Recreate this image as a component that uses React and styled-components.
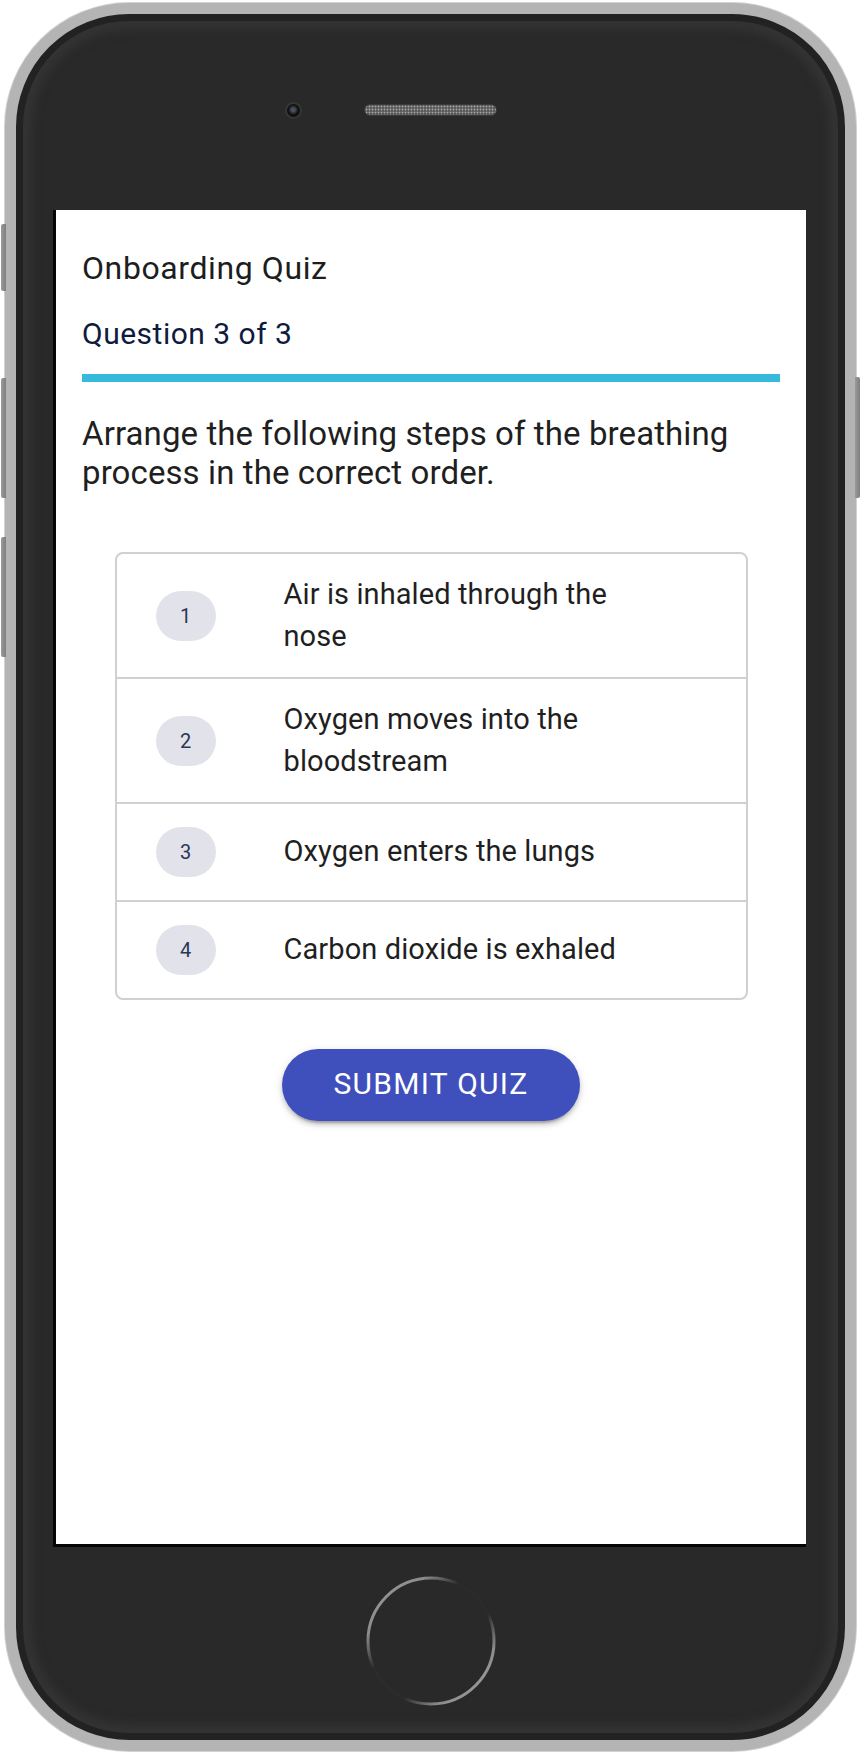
import React from "react";
import styled, { createGlobalStyle } from "styled-components";

const GlobalStyle = createGlobalStyle`
  html, body { margin: 0; padding: 0; background: #ffffff; }
  body { font-family: Roboto, "Liberation Sans", Arial, sans-serif; }
  * { box-sizing: border-box; }
`;

const Stage = styled.div`
  position: relative;
  width: 862px;
  height: 1754px;
  padding: 3px 0 0 5px;
`;

const SideKey = styled.div`
  position: absolute;
  z-index: 2;
  left: ${(p) => (p.$right ? "855px" : "1px")};
  top: ${(p) => p.$top}px;
  width: 5px;
  height: ${(p) => p.$h}px;
  border-radius: ${(p) => (p.$right ? "0 2px 2px 0" : "2px 0 0 2px")};
  background: linear-gradient(to right, #9a9a9a, #7e7e7e);
`;

const Phone = styled.div`
  position: relative;
  z-index: 1;
  width: 851px;
  height: 1748px;
  border: 11px solid #b4b4b4;
  border-radius: 124px;
  background: #292929;
  box-shadow: 0 0 0 1px #d2d2d2, inset 0 0 0 7px #222222,
    inset 0 0 10px 16px #333333;
  display: flex;
  flex-direction: column;
  padding: 0 39px 0 37px;
`;

const TopBezel = styled.div`
  height: 196px;
  margin: 0 -39px 0 -37px;
  padding-bottom: 4px;
  display: grid;
  grid-template-columns: 1fr auto 1fr;
  align-items: center;
`;

const Camera = styled.div`
  justify-self: end;
  margin-right: 62px;
  width: 17px;
  height: 17px;
  border-radius: 50%;
  border: 2px solid #363636;
  background: radial-gradient(circle at 48% 45%, #4a4f60 0 18%, #101010 50%);
`;

const Speaker = styled.div`
  width: 133px;
  height: 12px;
  border-radius: 6px;
  border: 1px solid #3a3a3a;
  background-color: #5a5a5a;
  background-image: radial-gradient(#a8a8a8 0.8px, transparent 1.1px);
  background-size: 3px 3px;
`;

const Screen = styled.div`
  height: 1337px;
  background: #ffffff;
  border-left: 3px solid #050505;
  border-bottom: 3px solid #050505;
  padding: 34px 26px 0 26px;
  overflow: hidden;
`;

const Title = styled.div`
  font-size: 32px;
  line-height: 48px;
  letter-spacing: 0.6px;
  color: #1d1d1d;
`;

const Counter = styled.div`
  margin-top: 19px;
  font-size: 30px;
  line-height: 45px;
  letter-spacing: 0.5px;
  color: #0e1b3d;
`;

const Track = styled.div`
  margin-top: 18px;
  height: 8px;
  background: #b6e6f1;
`;

const Fill = styled.div`
  height: 100%;
  background: #36b9da;
`;

const Prompt = styled.div`
  margin-top: 32px;
  font-size: 33px;
  line-height: 39px;
  letter-spacing: 0.1px;
  color: #1f1f1f;
`;

const Card = styled.div`
  width: 633px;
  margin: 60px auto 0;
  border: 2px solid #d0d0d0;
  border-radius: 8px;
  overflow: hidden;
`;

const Row = styled.div`
  display: flex;
  align-items: center;
  box-sizing: content-box;
  min-height: 56px;
  padding: 20px 0 20px 39px;
  & + & {
    border-top: 2px solid #d0d0d0;
  }
`;

const Badge = styled.div`
  flex-shrink: 0;
  width: 60px;
  height: 50px;
  border-radius: 25px;
  background: #e2e3ea;
  color: #2b3656;
  font-size: 20px;
  display: flex;
  align-items: center;
  justify-content: center;
`;

const ItemText = styled.div`
  margin-left: 68px;
  width: 350px;
  font-size: 29px;
  line-height: 41.5px;
  letter-spacing: 0.1px;
  color: #1f1f1f;
`;

const SubmitButton = styled.button`
  display: flex;
  align-items: center;
  justify-content: center;
  margin: 49px auto 0;
  width: 298px;
  height: 72px;
  padding: 0 0 4px;
  border: none;
  border-radius: 36px;
  background: #3f50bd;
  color: #ffffff;
  font-family: Roboto, "Liberation Sans", Arial, sans-serif;
  font-weight: 400;
  font-size: 30px;
  letter-spacing: 1.3px;
  text-transform: uppercase;
  box-shadow: 0 6px 2px -4px rgba(0, 0, 0, 0.2), 0 4px 4px 0 rgba(0, 0, 0, 0.14),
    0 2px 10px 0 rgba(0, 0, 0, 0.12);
  cursor: pointer;
`;

const BottomBezel = styled.div`
  flex: 1;
  display: flex;
  align-items: center;
  justify-content: center;
  margin: 0 -39px 0 -37px;
  padding-bottom: 5px;
`;

const HomeRing = () => (
  <svg width="134" height="134" viewBox="0 0 134 134">
    <defs>
      <linearGradient id="ringGrad" x1="0" y1="0" x2="1" y2="1">
        <stop offset="0" stopColor="#9c9c9c" />
        <stop offset="0.22" stopColor="#8c8c8c" />
        <stop offset="0.38" stopColor="#2b2b2b" />
        <stop offset="0.62" stopColor="#2b2b2b" />
        <stop offset="0.78" stopColor="#8c8c8c" />
        <stop offset="1" stopColor="#a6a6a6" />
      </linearGradient>
    </defs>
    <circle cx="67" cy="67" r="63" fill="none" stroke="url(#ringGrad)" strokeWidth="3" />
  </svg>
);

const steps = [
  "Air is inhaled through the nose",
  "Oxygen moves into the bloodstream",
  "Oxygen enters the lungs",
  "Carbon dioxide is exhaled",
];

export default function App() {
  return (
    <>
      <GlobalStyle />
      <Stage>
        <SideKey $top={224} $h={67} />
        <SideKey $top={378} $h={120} />
        <SideKey $top={537} $h={120} />
        <SideKey $right $top={377} $h={121} />
        <Phone>
          <TopBezel>
            <Camera />
            <Speaker />
            <div />
          </TopBezel>
          <Screen>
            <Title>Onboarding Quiz</Title>
            <Counter>Question 3 of 3</Counter>
            <Track>
              <Fill style={{ width: `${(3 / 3) * 100}%` }} />
            </Track>
            <Prompt>
              Arrange the following steps of the breathing process in the correct order.
            </Prompt>
            <Card>
              {steps.map((s, i) => (
                <Row key={s}>
                  <Badge>{i + 1}</Badge>
                  <ItemText>{s}</ItemText>
                </Row>
              ))}
            </Card>
            <SubmitButton>Submit Quiz</SubmitButton>
          </Screen>
          <BottomBezel>
            <HomeRing />
          </BottomBezel>
        </Phone>
      </Stage>
    </>
  );
}
